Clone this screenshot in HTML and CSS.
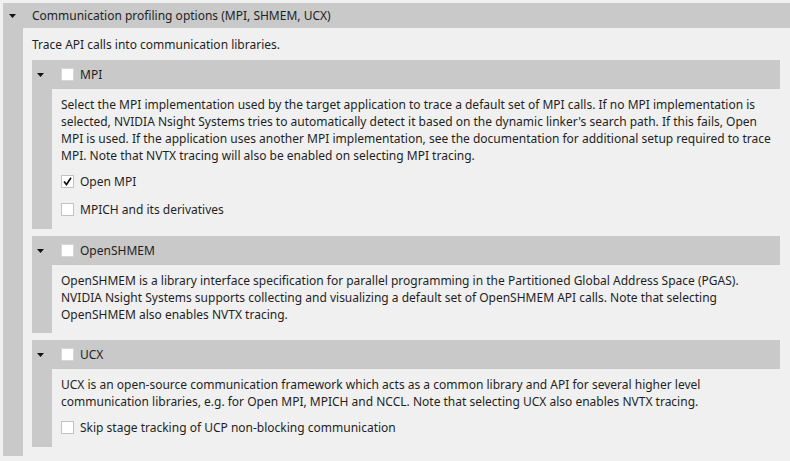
FILE: index.html
```html
<!DOCTYPE html>
<html>
<head>
<meta charset="utf-8">
<link rel="stylesheet" href="styles.css">
</head>
<body>
<div class="panel">
  <section class="sec">
    <div class="sec-head outer-head">
      <svg class="arrow" width="7" height="4" viewBox="0 0 7 4"><polygon points="0,0 7,0 3.5,4"/></svg>
      <span class="title">Communication profiling options (MPI, SHMEM, UCX)</span>
    </div>
    <div class="sec-body outer-body">
      <p class="desc">Trace API calls into communication libraries.</p>

      <section class="sub">
        <div class="sec-head sub-head">
          <svg class="arrow" width="7" height="4" viewBox="0 0 7 4"><polygon points="0,0 7,0 3.5,4"/></svg>
          <span class="box"></span>
          <span class="label">MPI</span>
        </div>
        <div class="sec-body sub-body">
          <p class="text">Select the MPI implementation used by the target application to trace a default set of MPI calls. If no MPI implementation is selected, NVIDIA Nsight Systems tries to automatically detect it based on the dynamic linker's search path. If this fails, Open MPI is used. If the application uses another MPI implementation, see the documentation for additional setup required to trace MPI. Note that NVTX tracing will also be enabled on selecting MPI tracing.</p>
          <div class="opts">
            <div class="opt"><span class="box checked"><svg width="11" height="11" viewBox="0 0 11 11"><polyline points="2,5.5 4.5,8.5 9,1.8"/></svg></span><span class="label">Open MPI</span></div>
            <div class="opt"><span class="box"></span><span class="label">MPICH and its derivatives</span></div>
          </div>
        </div>
      </section>

      <section class="sub">
        <div class="sec-head sub-head">
          <svg class="arrow" width="7" height="4" viewBox="0 0 7 4"><polygon points="0,0 7,0 3.5,4"/></svg>
          <span class="box"></span>
          <span class="label">OpenSHMEM</span>
        </div>
        <div class="sec-body sub-body">
          <p class="text">OpenSHMEM is a library interface specification for parallel programming in the Partitioned Global Address Space (PGAS). NVIDIA Nsight Systems supports collecting and visualizing a default set of OpenSHMEM API calls. Note that selecting OpenSHMEM also enables NVTX tracing.</p>
        </div>
      </section>

      <section class="sub">
        <div class="sec-head sub-head">
          <svg class="arrow" width="7" height="4" viewBox="0 0 7 4"><polygon points="0,0 7,0 3.5,4"/></svg>
          <span class="box"></span>
          <span class="label">UCX</span>
        </div>
        <div class="sec-body sub-body">
          <p class="text">UCX is an open-source communication framework which acts as a common library and API for several higher level communication libraries, e.g. for Open MPI, MPICH and NCCL. Note that selecting UCX also enables NVTX tracing.</p>
          <div class="opts">
            <div class="opt"><span class="box"></span><span class="label">Skip stage tracking of UCP non-blocking communication</span></div>
          </div>
        </div>
      </section>
    </div>
  </section>
</div>
</body>
</html>
```

FILE: styles.css
```css
html, body {
  margin: 0;
  padding: 0;
  background: #f0f0f0;
}

body {
  font-family: "Noto Sans", "Open Sans", sans-serif;
  font-size: 12px;
  color: #1f1f1f;
  width: 790px;
  height: 461px;
  overflow: hidden;
}

.panel {
  padding: 3px 0 0 3px;
}

.sec-head {
  display: flex;
  align-items: center;
  background: #c9c9c9;
}

.arrow {
  display: block;
  fill: #111;
  flex: none;
}

.outer-head {
  height: 25px;
  padding-left: 6px;
}

.outer-head .title {
  margin-left: 16px;
  line-height: 17px;
}

.sec-body {
  border-left: 20px solid #c9c9c9;
}

.outer-body {
  padding: 8px 10px 9px 9px;
}

.desc {
  margin: 0 0 7px;
  line-height: 17px;
}

.sub + .sub {
  margin-top: 7px;
}

.sub-head {
  height: 29px;
  padding-left: 5px;
}

.sub-head .box {
  margin-left: 17px;
}

.sub-head .label {
  margin-left: 6px;
}

.box {
  box-sizing: border-box;
  width: 13px;
  height: 13px;
  background: #fff;
  border: 1px solid #c2c2c2;
  flex: none;
  display: flex;
  align-items: center;
  justify-content: center;
}

.sub-head .box {
  border-color: #d6d6d6;
}

.box svg polyline {
  fill: none;
  stroke: #111;
  stroke-width: 1.7;
}

.sub-body {
  padding: 7px 6px 10px 9px;
}

.text {
  margin: 0;
  line-height: 17px;
}

.opts {
  display: flex;
  flex-direction: column;
  gap: 8px;
  margin-top: 7px;
}

.opt {
  display: flex;
  align-items: center;
  height: 20px;
}

.opt .label {
  margin-left: 6px;
}
```
